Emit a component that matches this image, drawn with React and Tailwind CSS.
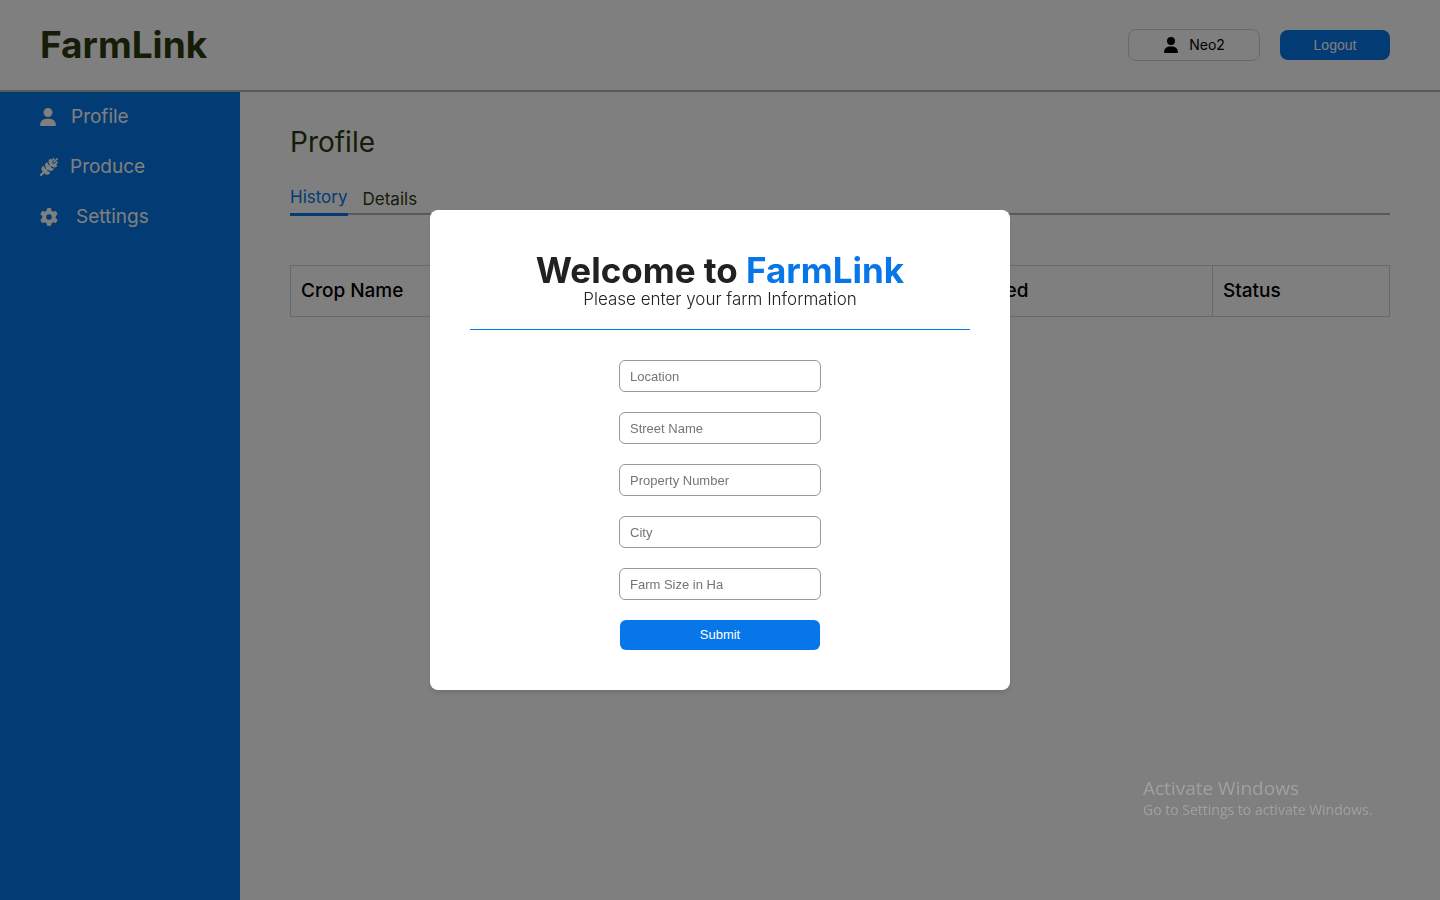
import { FaUser, FaWheatAwn, FaGear } from "react-icons/fa6";

const fields = ["Location", "Street Name", "Property Number", "City", "Farm Size in Ha"];

function NavItem({ icon: Icon, label, shape }) {
  return (
    <a href="#" className={`flex h-[50px] items-center px-10 text-[19px] text-white ${shape}`}>
      <Icon className="h-[18px] w-auto" />
      {label}
    </a>
  );
}

function Dashboard() {
  return (
    <div className="flex min-h-screen flex-col bg-white">
      <header className="flex h-[92px] items-center justify-between border-b-2 border-[#b2b2b2] pr-[50px] pl-10">
        <h1 className="text-[37px] leading-[44px] font-bold text-[#2b3a12]">FarmLink</h1>
        <div className="flex items-center gap-5">
          <button className="flex h-8 w-[132px] items-center justify-center gap-2.5 rounded-lg border border-[#d3d3d3] text-sm text-black">
            <FaUser className="h-4 w-auto" />
            Neo2
          </button>
          <button className="h-[30px] w-[110px] rounded-lg bg-[#0676e8] font-['Liberation_Sans',sans-serif] text-sm text-white">
            Logout
          </button>
        </div>
      </header>
      <div className="flex flex-1">
        <nav className="w-60 shrink-0 bg-[#0676e8]">
          <NavItem icon={FaUser} label="Profile" shape="gap-[15px] [&>svg]:w-4" />
          <NavItem icon={FaWheatAwn} label="Produce" shape="gap-3 [&>svg]:w-[18px]" />
          <NavItem icon={FaGear} label="Settings" shape="gap-[18px] [&>svg]:w-[18px]" />
        </nav>
        <main className="flex-1 px-[50px] pt-8">
          <h2 className="text-[28px] leading-9 text-[#2b3a12]">Profile</h2>
          <div className="mt-6 flex h-[31px] items-end gap-[15px] border-b-2 border-[#b2b2b2]">
            <a href="#" className="-mb-[3px] border-b-3 border-[#0676e8] pb-1.5 text-[17px] leading-5 text-[#0676e8]">
              History
            </a>
            <a href="#" className="pb-1 text-[17px] leading-5 text-[#2b3a12]">Details</a>
          </div>
          <table className="mt-[50px] w-full table-fixed border-collapse text-left text-[19px] text-black">
            <thead>
              <tr className="h-[51px]">
                <th className="w-[283px] border border-[#d3d3d3] px-2.5 font-medium">Crop Name</th>
                <th className="border border-[#d3d3d3] px-2.5 font-medium">Quantity</th>
                <th className="w-[310px] border border-[#d3d3d3] px-2.5 font-medium">Date Planted</th>
                <th className="w-[177px] border border-[#d3d3d3] px-2.5 font-medium">Status</th>
              </tr>
            </thead>
          </table>
        </main>
      </div>
    </div>
  );
}

function FarmDialog() {
  return (
    <div className="fixed inset-0 flex items-center justify-center bg-black/50">
      <section
        role="dialog"
        aria-labelledby="welcome"
        className="w-[580px] rounded-lg bg-white px-10 py-10 shadow-md"
      >
        <h2 id="welcome" className="text-center text-[35px] leading-10 font-bold text-[#212121]">
          Welcome to <span className="text-[#0676e8]">FarmLink</span>
        </h2>
        <p className="border-b border-[#0676e8] pb-5 text-center text-[17px] leading-[19px] font-light text-[#212121]">
          Please enter your farm Information
        </p>
        <form className="mx-auto mt-[30px] flex w-[202px] flex-col gap-5 font-['Liberation_Sans',sans-serif] text-[13px]">
          {fields.map((name) => (
            <input
              key={name}
              aria-label={name}
              placeholder={name}
              className="h-8 rounded-md border border-[#999999] px-2.5 placeholder:text-[#757575]"
            />
          ))}
          <button type="button" className="mx-px h-[30px] rounded-md bg-[#0676e8] text-white">
            Submit
          </button>
        </form>
      </section>
    </div>
  );
}

export default function App() {
  return (
    <div className="font-['Inter',sans-serif]">
      <Dashboard />
      <FarmDialog />
      <div className="pointer-events-none fixed right-[61px] bottom-20 w-[236px] font-['Open_Sans',sans-serif] text-[#a0a0a0]">
        <p className="text-[19px] leading-6">Activate Windows</p>
        <p className="text-sm leading-5">Go to Settings to activate Windows.</p>
      </div>
    </div>
  );
}
